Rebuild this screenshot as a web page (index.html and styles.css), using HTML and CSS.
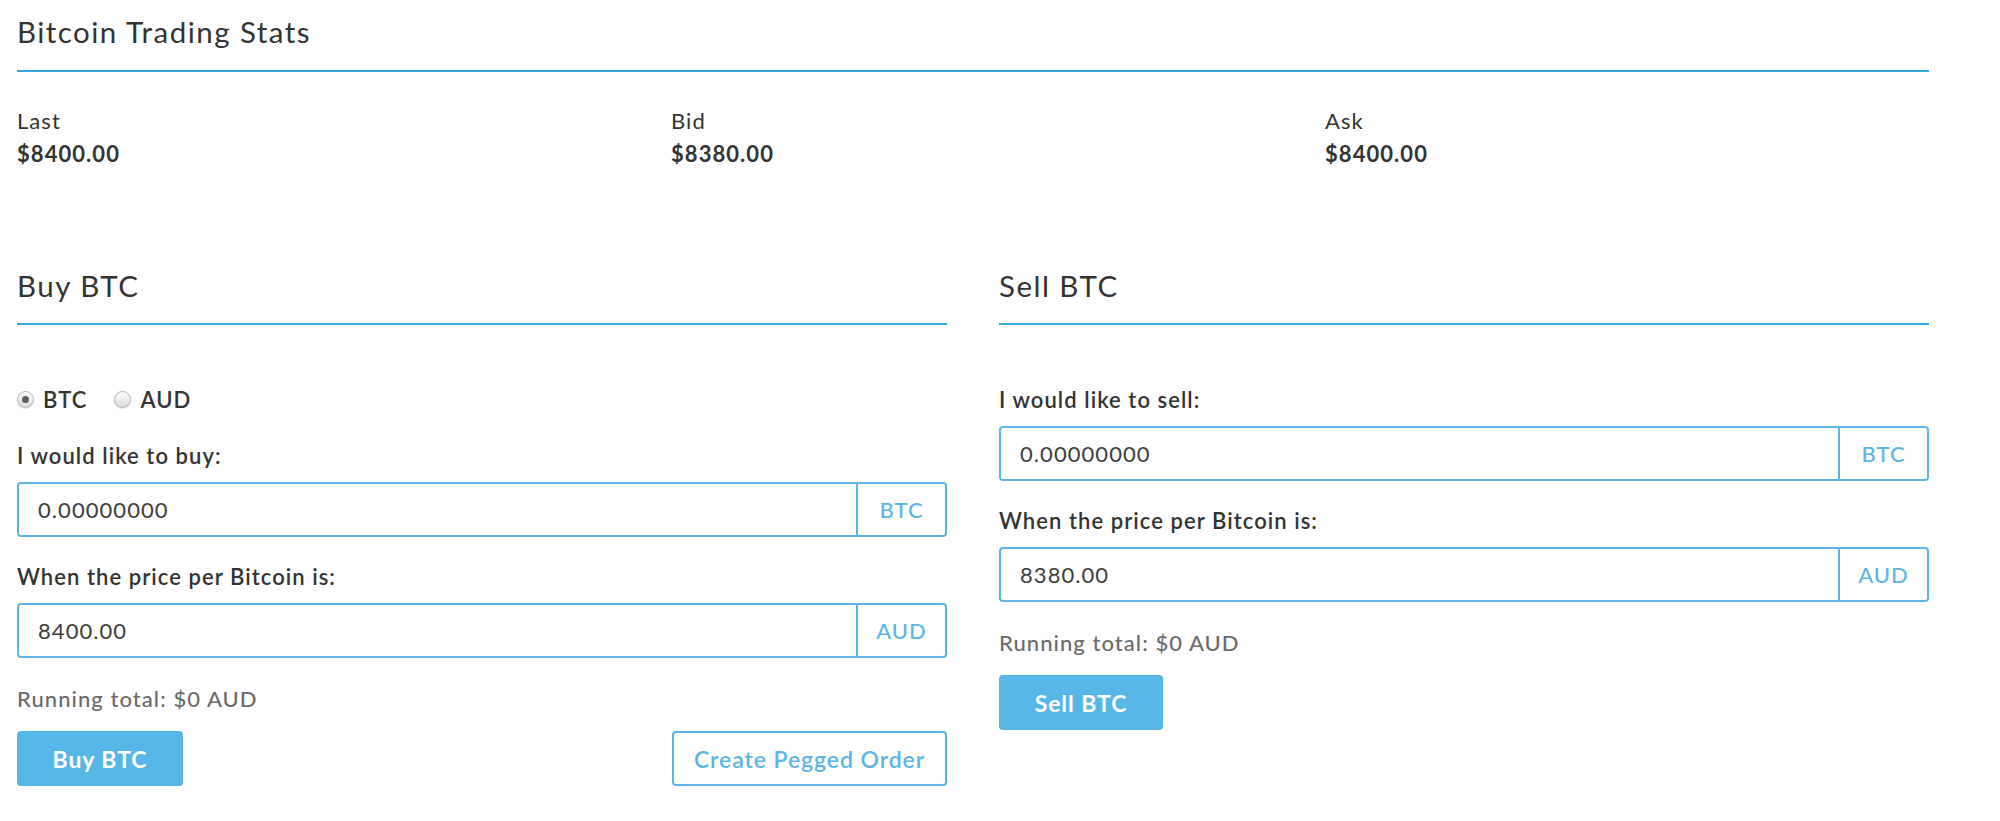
FILE: index.html
```html
<!DOCTYPE html>
<html lang="en">
<head>
<meta charset="utf-8">
<title>Bitcoin Trading</title>
<link rel="stylesheet" href="styles.css">
</head>
<body>
<main class="page">
  <section class="stats">
    <h1 class="section-title">Bitcoin Trading Stats</h1>
    <div class="stats-grid">
      <div class="stat">
        <div class="stat-label">Last</div>
        <div class="stat-value">$8400.00</div>
      </div>
      <div class="stat">
        <div class="stat-label">Bid</div>
        <div class="stat-value">$8380.00</div>
      </div>
      <div class="stat">
        <div class="stat-label">Ask</div>
        <div class="stat-value">$8400.00</div>
      </div>
    </div>
  </section>

  <div class="trade-grid">
    <section class="trade">
      <h2 class="section-title">Buy BTC</h2>
      <div class="trade-body">
        <div class="radio-row">
          <label class="radio-option"><span class="radio checked"></span>BTC</label>
          <label class="radio-option"><span class="radio"></span>AUD</label>
        </div>
        <div class="field">
          <div class="field-label">I would like to buy:</div>
          <div class="input-group">
            <div class="input-value">0.00000000</div>
            <div class="input-addon">BTC</div>
          </div>
        </div>
        <div class="field">
          <div class="field-label">When the price per Bitcoin is:</div>
          <div class="input-group">
            <div class="input-value">8400.00</div>
            <div class="input-addon">AUD</div>
          </div>
        </div>
        <div class="running">Running total: $0 AUD</div>
        <div class="actions">
          <button class="btn btn-primary btn-buy">Buy BTC</button>
          <button class="btn btn-outline">Create Pegged Order</button>
        </div>
      </div>
    </section>

    <section class="trade">
      <h2 class="section-title">Sell BTC</h2>
      <div class="trade-body">
        <div class="field">
          <div class="field-label">I would like to sell:</div>
          <div class="input-group">
            <div class="input-value">0.00000000</div>
            <div class="input-addon">BTC</div>
          </div>
        </div>
        <div class="field">
          <div class="field-label">When the price per Bitcoin is:</div>
          <div class="input-group">
            <div class="input-value">8380.00</div>
            <div class="input-addon">AUD</div>
          </div>
        </div>
        <div class="running">Running total: $0 AUD</div>
        <div class="actions">
          <button class="btn btn-primary btn-sell">Sell BTC</button>
        </div>
      </div>
    </section>
  </div>
</main>
</body>
</html>
```

FILE: styles.css
```css
* { box-sizing: border-box; }

html, body {
  margin: 0;
  padding: 0;
  background: #ffffff;
}

body {
  font-family: Lato, "Liberation Sans", sans-serif;
  font-size: 22px;
  line-height: 33px;
  letter-spacing: 0.048em;
  color: #333333;
}

.page {
  width: 1912px;
  margin-left: 17px;
  padding-top: 14px;
}

.section-title {
  margin: 0;
  font-size: 29.5px;
  line-height: 36px;
  font-weight: 400;
  letter-spacing: 0.05em;
  color: #333333;
  padding-bottom: 20px;
  border-bottom: 2px solid #33a8df;
}

.stats-grid {
  display: grid;
  grid-template-columns: repeat(3, 1fr);
  column-gap: 50px;
  margin-top: 32px;
}

.stat-label {
  font-weight: 400;
}

.stat-value {
  font-weight: 700;
}

.trade-grid {
  display: grid;
  grid-template-columns: 1fr 1fr;
  column-gap: 52px;
  margin-top: 98px;
}

.trade .section-title {
  padding-bottom: 19px;
}

.trade-body {
  padding-top: 58px;
}

.radio-row {
  display: flex;
  gap: 27px;
  margin-bottom: 23px;
  font-weight: 600;
}

.radio-option {
  display: flex;
  align-items: center;
  gap: 9px;
}

.radio {
  width: 17px;
  height: 17px;
  border-radius: 50%;
  border: 1px solid #b3b3b3;
  background: linear-gradient(#fdfdfd, #dcdcdc);
  box-shadow: 0 1px 1px rgba(0, 0, 0, 0.12);
  display: flex;
  align-items: center;
  justify-content: center;
}

.radio.checked::after {
  content: "";
  width: 7px;
  height: 7px;
  border-radius: 50%;
  background: #5e5e5e;
}

.field {
  margin-bottom: 23px;
}

.field-label {
  font-weight: 600;
  margin-bottom: 10px;
}

.input-group {
  display: flex;
  height: 55px;
  border: 2px solid #5cb5e6;
  border-radius: 4px;
}

.input-value {
  flex: 1;
  display: flex;
  align-items: center;
  padding-left: 19px;
  color: #3d3d3d;
}

.input-addon {
  width: 89px;
  display: flex;
  align-items: center;
  justify-content: center;
  border-left: 2px solid #5cb5e6;
  color: #5cb5e6;
  font-weight: 500;
}

.running {
  margin-top: 24px;
  color: #6a6a6a;
  font-weight: 500;
}

.actions {
  display: flex;
  justify-content: space-between;
  margin-top: 16px;
}

.btn {
  height: 55px;
  font-family: inherit;
  font-size: 23px;
  letter-spacing: 0.04em;
  font-weight: 700;
  border-radius: 4px;
  cursor: pointer;
}

.btn-primary {
  background: #56b7e6;
  border: 0;
  color: #ffffff;
}

.btn-buy {
  width: 166px;
}

.btn-sell {
  width: 164px;
}

.btn-outline {
  width: 275px;
  background: #ffffff;
  border: 2px solid #5cb5e6;
  color: #5cb5e6;
  font-weight: 600;
}
```
